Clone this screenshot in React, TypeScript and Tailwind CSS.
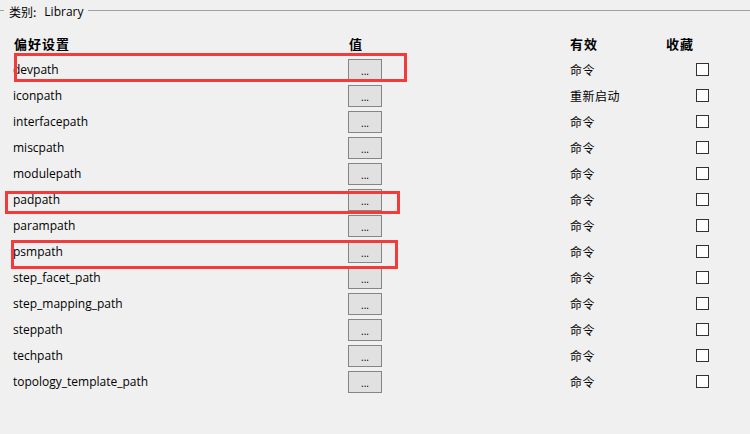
import React from "react";

const rows: [string, string][] = [
  ["devpath", "命令"],
  ["iconpath", "重新启动"],
  ["interfacepath", "命令"],
  ["miscpath", "命令"],
  ["modulepath", "命令"],
  ["padpath", "命令"],
  ["parampath", "命令"],
  ["psmpath", "命令"],
  ["step_facet_path", "命令"],
  ["step_mapping_path", "命令"],
  ["steppath", "命令"],
  ["techpath", "命令"],
  ["topology_template_path", "命令"],
];

const latin = { fontFamily: '"Open Sans", "Noto Sans CJK SC", sans-serif' };
const cjk = { fontFamily: '"Noto Sans CJK SC", sans-serif' };

export default function App() {
  return (
    <div className="relative w-[750px] h-[434px] overflow-hidden bg-[#f0f0f0] text-black">
      <fieldset className="m-0 p-0 border-0 border-t border-[#a0a0a0] mt-[1px]">
        <legend className="ml-[4px] px-[5px] pt-[4px] text-[12px] leading-[14px] flex items-center" style={cjk}>
          <span>类别:</span>
          <span className="ml-[8px]" style={latin}>Library</span>
        </legend>
        <div className="pl-[13px] pt-[12px]">
          <div className="grid grid-cols-[335px_222px_96px_84px] h-[26px] items-center text-[13px] font-bold tracking-[1px]" style={cjk}>
            <div className="pl-[1px]">偏好设置</div>
            <div className="pl-[1px]">值</div>
            <div>有效</div>
            <div>收藏</div>
          </div>
          {rows.map(([name, eff]) => (
            <div key={name} className="grid grid-cols-[335px_222px_96px_84px] h-[26px] items-center">
              <div className="text-[12px] leading-none" style={latin}>{name}</div>
              <div>
                <div className="w-[34px] h-[22px] bg-[#e1e1e1] border border-[#858585] flex items-end justify-center pb-[4px] text-[10px] leading-none" style={latin}>...</div>
              </div>
              <div className="text-[12px] tracking-[0.5px]" style={cjk}>{eff}</div>
              <div className="pl-[30px]">
                <div className="w-[13px] h-[13px] bg-white border border-[#333333] -mt-[1px]" />
              </div>
            </div>
          ))}
        </div>
      </fieldset>
      <div className="absolute left-[14px] top-[53px] w-[393px] h-[29px] border-[3px] border-[#f23b3b]" />
      <div className="absolute left-[5px] top-[191px] w-[395px] h-[23px] border-[3px] border-[#f23b3b]" />
      <div className="absolute left-[11px] top-[240px] w-[387px] h-[29px] border-[3px] border-[#f23b3b]" />
    </div>
  );
}
